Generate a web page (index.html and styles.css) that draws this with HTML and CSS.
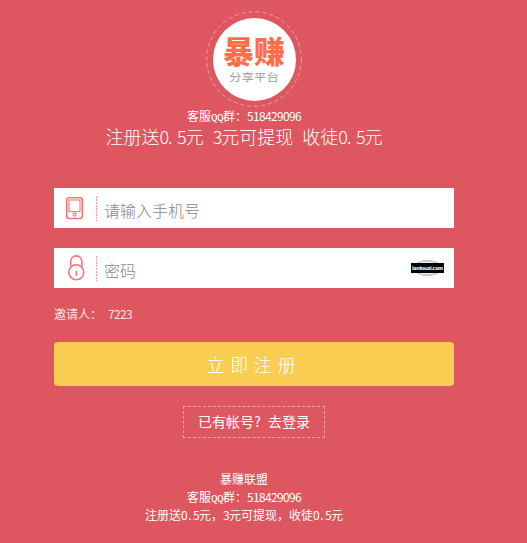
FILE: index.html
```html
<!DOCTYPE html>
<html lang="zh-CN">
<head>
<meta charset="utf-8">
<title>注册</title>
<link rel="stylesheet" href="styles.css">
</head>
<body>
<header class="top">
  <div class="logo">
    <svg class="ring" viewBox="0 0 96 96"><circle cx="48" cy="48" r="47.3"/></svg>
    <div class="disc"><strong>暴赚</strong><span>分享平台</span></div>
  </div>
  <p class="qq">客服<span class="q">QQ</span>群：<span class="n">518429096</span></p>
  <h1 class="offer">注册送<span class="n">0<i>.</i>5</span>元<span class="n"><i> </i>3</span>元可提现<span class="n"><i> </i></span>收徒<span class="n">0<i>.</i>5</span>元</h1>
</header>
<form class="form">
  <div class="field">
    <svg class="icon" viewBox="0 0 42 40">
      <rect x="12.7" y="9.7" width="15.6" height="20.8" rx="2.2"/>
      <rect class="thin" x="15" y="12" width="11" height="11.6"/>
      <circle class="thin" cx="20.5" cy="26.6" r="1.5"/>
    </svg>
    <i class="sep"></i>
    <input type="text" placeholder="请输入手机号">
  </div>
  <div class="field">
    <svg class="icon" viewBox="0 0 42 40">
      <path d="M16.7 18.5V13.5a5.6 5.6 0 0 1 11.2 0V18.5"/>
      <circle cx="22.3" cy="24.3" r="7.5"/>
      <path d="M22.3 22.8v5"/>
    </svg>
    <i class="sep"></i>
    <input type="password" placeholder="密码">
    <span class="mark"><b>lantouzi.com</b></span>
  </div>
  <p class="inviter">邀请人：<span class="n"><i> </i>7223</span></p>
  <button class="submit" type="button">立即注册</button>
  <a class="login">已有帐号<span class="n"><i>?</i><i> </i></span>去登录</a>
</form>
<footer class="foot">
  <p>暴赚联盟</p>
  <p>客服<span class="q">QQ</span>群：<span class="n">518429096</span></p>
  <p>注册送<span class="n">0<i>.</i>5</span>元，<span class="n">3</span>元可提现，收徒<span class="n">0<i>.</i>5</span>元</p>
</footer>
</body>
</html>
```
FILE: styles.css
```css
* { box-sizing: border-box; }
body {
  margin: 0;
  width: 527px;
  height: 543px;
  overflow: hidden;
  background: #de5660;
  color: #fff;
  font: 12px/18px "Noto Sans CJK SC", sans-serif;
}
p, h1 { margin: 0; }
/* half-width digits and latin, 0.5em per character */
.n { letter-spacing: -.055em; white-space: pre; }
.n i { display: inline-block; width: .5em; font-style: normal; letter-spacing: 0; line-height: 1; }
.q { font-family: "Liberation Mono", monospace; font-size: 11px; line-height: 1; letter-spacing: -.6px; }
.top {
  display: flex;
  flex-direction: column;
  align-items: center;
  width: 488px;
  padding-top: 11px;
  white-space: nowrap;
}
.logo {
  display: grid;
  place-items: center;
  width: 96px;
  height: 96px;
  margin-left: 20px;
}
.ring, .disc { grid-area: 1 / 1; }
.ring { width: 96px; height: 96px; fill: none; stroke: #f0a0a6; stroke-width: 1; stroke-dasharray: 4 3; }
.disc {
  display: flex;
  flex-direction: column;
  align-items: center;
  width: 83px;
  height: 83px;
  padding-top: 13px;
  border-radius: 50%;
  background: #fff;
}
.disc strong { font-size: 31px; font-weight: 900; line-height: 38px; color: #ff6f47; }
.disc span { font-size: 12.5px; line-height: 16px; color: #999; transform: scaleY(.82); }
.qq { height: 18px; }
.offer { height: 24px; margin-top: -1px; font-size: 18px; font-weight: 300; line-height: 24px; }
.form {
  display: flex;
  flex-direction: column;
  width: 400px;
  margin: 40px 0 0 54px;
}
.field {
  display: flex;
  align-items: center;
  height: 40px;
  margin-bottom: 20px;
  background: #fff;
}
.icon { flex: none; width: 42px; height: 40px; fill: none; stroke: #fb7377; stroke-width: 1.6; }
.icon .thin { stroke-width: 1.1; }
.sep { width: 1px; height: 25px; margin-right: 7px; background: repeating-linear-gradient(#f99 0 2px, #fff 2px 3px); }
.field input {
  flex: 1;
  min-width: 0;
  height: 40px;
  padding: 3px 0 0;
  border: 0;
  outline: 0;
  background: none;
  font: 300 16px "Noto Sans CJK SC", sans-serif;
}
.field input::placeholder { color: #888; opacity: 1; }
.mark {
  display: grid;
  place-items: center;
  width: 33px;
  height: 16px;
  margin-right: 10px;
  background: radial-gradient(ellipse 15px 8px, #eee 78%, #ccc 82% 98%, transparent 100%);
}
.mark b {
  width: 33px;
  height: 10px;
  background: #000;
  font: bold 5px/10px "DejaVu Sans", sans-serif;
  letter-spacing: -.45px;
  text-align: center;
}
.inviter { height: 18px; margin-top: -3px; color: #fbe3e4; }
.submit {
  height: 44px;
  margin-top: 19px;
  padding: 0;
  border: 0;
  border-radius: 4px;
  background: #f8cd51;
  color: #fff;
  font: 300 18px "Noto Sans CJK SC", sans-serif;
  letter-spacing: 5.7px;
}
.login {
  align-self: center;
  width: 142px;
  height: 32px;
  margin-top: 20px;
  border: 1px dashed #f2a5ab;
  font-size: 14px;
  line-height: 29px;
  text-align: center;
}
.foot { width: 488px; margin-top: 32px; text-align: center; }
.foot p { height: 18px; }
```
